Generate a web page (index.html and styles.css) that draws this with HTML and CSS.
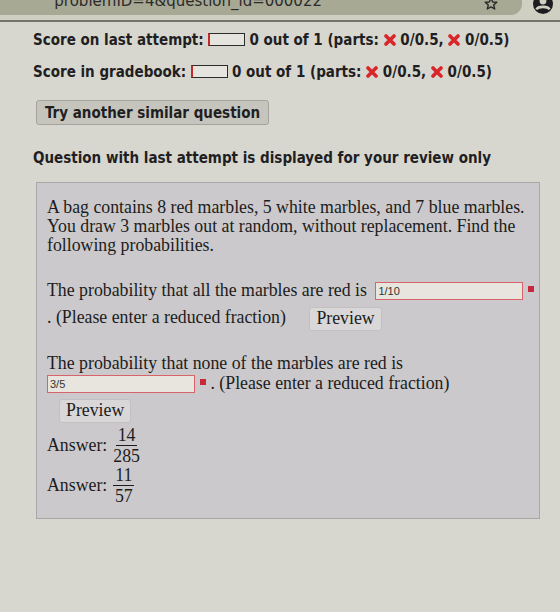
FILE: index.html
```html
<!DOCTYPE html>
<html lang="en">
<head>
    <meta charset="UTF-8">
    <meta name="viewport" content="width=device-width, initial-scale=1.0">
    <title>Problem 4</title>
    <link rel="stylesheet" href="styles.css">
</head>
<body>

    <div class="chrome">
        <div class="urlbar">
            <span class="url">problemID=4&amp;question_id=000022</span>
            <svg class="star" width="14" height="14" viewBox="0 0 14 14" aria-hidden="true">
                <path d="M7 1.2 L8.7 5 L12.8 5.3 L9.7 8 L10.7 12 L7 9.9 L3.3 12 L4.3 8 L1.2 5.3 L5.3 5 Z" fill="none" stroke="#2a2a2a" stroke-width="1.4" stroke-linejoin="round"/>
            </svg>
        </div>
        <svg class="account" width="22" height="22" viewBox="0 0 22 22" aria-hidden="true">
            <circle cx="11" cy="11" r="10" fill="#1d1d1f"/>
            <circle cx="11" cy="8" r="3.4" fill="#cfd0c2"/>
            <path d="M4.5 16.5 C6 13 16 13 17.5 16.5" stroke="#cfd0c2" stroke-width="2.6" fill="none"/>
        </svg>
    </div>

    <main class="page">
        <p class="score">Score on last attempt: <span class="meter"></span>0 out of 1 (parts: <svg class="wrong" viewBox="0 0 12 12"><path d="M2 2 L10 10 M10 2 L2 10"/></svg> 0/0.5, <svg class="wrong" viewBox="0 0 12 12"><path d="M2 2 L10 10 M10 2 L2 10"/></svg> 0/0.5)</p>
        <p class="score">Score in gradebook: <span class="meter"></span>0 out of 1 (parts: <svg class="wrong" viewBox="0 0 12 12"><path d="M2 2 L10 10 M10 2 L2 10"/></svg> 0/0.5, <svg class="wrong" viewBox="0 0 12 12"><path d="M2 2 L10 10 M10 2 L2 10"/></svg> 0/0.5)</p>

        <button class="try-again" type="button">Try another similar question</button>

        <p class="review-note">Question with last attempt is displayed for your review only</p>

        <div class="problem">
            <p class="intro">A bag contains 8 red marbles, 5 white marbles, and 7 blue marbles. You draw 3 marbles out at random, without replacement. Find the following probabilities.</p>

            <div class="part part-one">
                <div class="row">The probability that all the marbles are red is <input class="answer-box answer-inline" type="text" value="1/10" readonly><span class="flag"></span></div>
                <div class="row row-tall">. (Please enter a reduced fraction) <button class="preview" type="button">Preview</button></div>
            </div>

            <div class="part part-two">
                <div class="row">The probability that none of the marbles are red is</div>
                <div class="row"><input class="answer-box" type="text" value="3/5" readonly><span class="flag"></span> . (Please enter a reduced fraction)</div>
                <div class="row row-short"><button class="preview preview-indent" type="button">Preview</button></div>
            </div>

            <div class="answer">Answer: <span class="frac"><span class="num">14</span><span class="den">285</span></span></div>
            <div class="answer">Answer: <span class="frac"><span class="num">11</span><span class="den">57</span></span></div>
        </div>
    </main>

</body>
</html>
```

FILE: styles.css
```css
body {
    margin: 0;
    background-color: #d8d7cf;
    color: #1f1f23;
}

/* browser toolbar strip along the top */
.chrome {
    position: relative;
    height: 20px;
    background-color: #cfd0c2;
    border-bottom: 2px solid #75736d;
}

.urlbar {
    position: relative;
    width: 522px;
    height: 15px;
    background-color: #a7a994;
    border-bottom-right-radius: 11px;
    overflow: hidden;
}

.url {
    position: absolute;
    right: 200px;
    top: -8px;
    font-family: "DejaVu Sans", sans-serif;
    font-size: 15px;
    color: #2b2b2b;
    white-space: nowrap;
}

.star {
    position: absolute;
    right: 24px;
    top: -3px;
}

.account {
    position: absolute;
    right: 6px;
    top: -7px;
}

.page {
    padding: 2px 0 0 33px;
    font-family: "DejaVu Sans Condensed", "DejaVu Sans", sans-serif;
    font-stretch: condensed;
}

.score {
    margin: 0;
    line-height: 32px;
    font-size: 15px;
    font-weight: bold;
    white-space: nowrap;
}

.meter {
    display: inline-block;
    width: 34px;
    height: 11px;
    margin: 0 4px 0 0;
    vertical-align: -1px;
    background-color: #e6e4de;
    border: 1px solid #2c2c2c;
    border-left: 2px solid #c42a2a;
}

.wrong {
    width: 12px;
    height: 12px;
    vertical-align: -1px;
}

.wrong path {
    stroke: #d8262b;
    stroke-width: 3.6;
    stroke-linecap: round;
    fill: none;
}

.try-again {
    display: block;
    margin: 12px 0 0 3px;
    height: 25px;
    padding: 0 8px;
    font-family: inherit;
    font-stretch: condensed;
    font-size: 15px;
    font-weight: bold;
    color: #1f1f23;
    background-color: #c6c5bd;
    border: 1px solid #a4a39c;
    border-radius: 3px;
}

.review-note {
    margin: 21px 0 0;
    line-height: 24px;
    font-size: 15px;
    font-weight: bold;
}

.problem {
    margin: 12px 20px 0 3px;
    padding: 15px 4px 10px 10px;
    height: 310px;
    background-color: #cbc9cb;
    border: 1px solid #a9a7a9;
    font-family: "Liberation Serif", serif;
    font-stretch: normal;
    font-size: 17.8px;
    line-height: 19px;
    color: #1c1c20;
}

.intro {
    margin: 0;
}

.part-one {
    margin-top: 25px;
}

.part-two {
    margin-top: 19px;
}

.row {
    height: 20px;
    line-height: 20px;
    white-space: nowrap;
}

.row-tall {
    height: 34px;
    line-height: 34px;
}

.row-short {
    height: 32px;
    line-height: 32px;
}

.answer-box {
    width: 142px;
    height: 16px;
    margin: 0;
    padding: 0 2px;
    vertical-align: 1px;
    font-family: "Liberation Sans", sans-serif;
    font-size: 11px;
    color: #333;
    background-color: #e7e5dd;
    border: 1px solid #d9636a;
    border-radius: 0;
}

.answer-inline {
    margin-left: 4px;
}

.flag {
    display: inline-block;
    width: 6px;
    height: 6px;
    margin-left: 5px;
    vertical-align: 4px;
    background-color: #c9283b;
}

.preview {
    height: 24px;
    margin-left: 19px;
    padding: 0 6px;
    font-family: "Liberation Serif", serif;
    font-size: 17.8px;
    color: #1c1c20;
    background-color: #d9d7d7;
    border: 1px solid #c2c0c0;
    border-radius: 3px;
    vertical-align: middle;
}

.preview-indent {
    margin-left: 12px;
}

.answer {
    display: flex;
    align-items: center;
    gap: 6px;
    height: 40px;
}

.frac {
    display: inline-flex;
    flex-direction: column;
    align-items: center;
    line-height: 20px;
}

.num {
    padding: 0 2px;
    border-bottom: 1px solid #1c1c20;
}
```
